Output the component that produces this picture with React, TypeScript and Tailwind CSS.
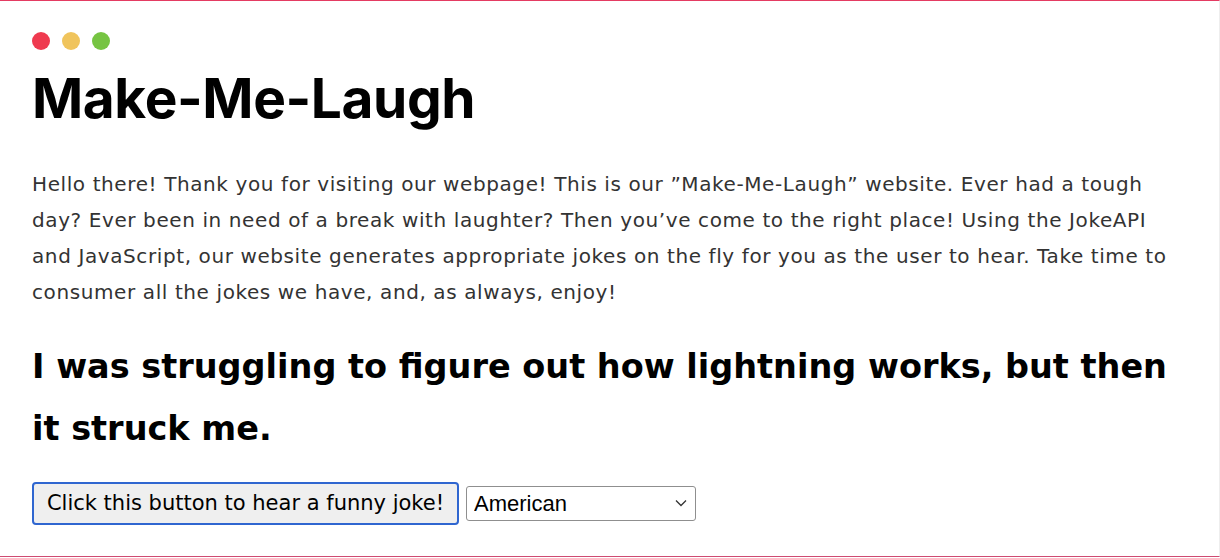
import { useState } from 'react';

export default function App() {
  const [lang, setLang] = useState('American');

  return (
    <main className="h-[557px] w-full overflow-hidden border-t border-b border-r border-t-[#e43b62] border-b-[#cf4a72] border-r-[#eeeeee] bg-white px-8 font-['DejaVu_Sans',sans-serif] text-black">
      {/* window dots */}
      <div className="flex gap-3 pt-[31px]">
        <span className="h-[18px] w-[18px] rounded-full bg-[#ef3a4f]"></span>
        <span className="h-[18px] w-[18px] rounded-full bg-[#f0c45c]"></span>
        <span className="h-[18px] w-[18px] rounded-full bg-[#76c442]"></span>
      </div>

      <h1 className="mt-[12px] font-['Inter',sans-serif] text-[55px] font-bold leading-[72px] tracking-[-0.4px]">Make-Me-Laugh</h1>

      <p className="mt-[32px] whitespace-nowrap text-[20px] leading-[36px] tracking-[0.6px] text-[#333]">
        Hello there! Thank you for visiting our webpage! This is our ”Make-Me-Laugh” website. Ever had a tough
        <br />
        day? Ever been in need of a break with laughter? Then you’ve come to the right place! Using the JokeAPI
        <br />
        and JavaScript, our website generates appropriate jokes on the fly for you as the user to hear. Take time to
        <br />
        consumer all the jokes we have, and, as always, enjoy!
      </p>

      <h2 className="mt-[26px] whitespace-nowrap text-[33.5px] font-bold leading-[62px]">
        I was struggling to figure out how lightning works, but then
        <br />
        it struck me.
      </h2>

      <div className="mt-[22px] flex items-center gap-[7px]">
        <button className="h-[43px] w-[427px] rounded-[4px] border-2 border-[#2f66d0] bg-[#efefef] text-[21px] text-black">
          Click this button to hear a funny joke!
        </button>
        <div className="relative">
          <select
            value={lang}
            onChange={(e) => setLang(e.target.value)}
            className="h-[35px] w-[230px] appearance-none rounded-[3px] border border-[#8f8f8f] bg-white pl-[7px] font-['Liberation_Sans',sans-serif] text-[22px] text-black"
          >
            <option>American</option>
            <option>British</option>
            <option>Australian</option>
          </select>
          <svg className="pointer-events-none absolute right-[9px] top-[13px]" width="12" height="8" viewBox="0 0 12 8" fill="none">
            <path d="M1 1.5l5 5 5-5" stroke="#333" strokeWidth="1.3" />
          </svg>
        </div>
      </div>
    </main>
  );
}
